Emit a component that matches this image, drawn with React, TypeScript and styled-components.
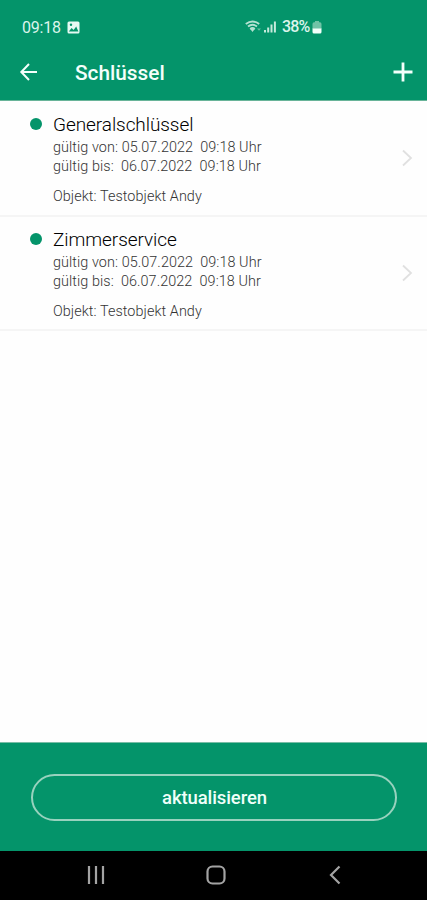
import React from 'react';
import styled, { createGlobalStyle } from 'styled-components';

const GREEN = '#04946a';

const GlobalStyle = createGlobalStyle`
  * { box-sizing: border-box; }
  body { margin: 0; font-family: Roboto, sans-serif; background: #fff; }
`;

const Screen = styled.div`
  display: flex;
  flex-direction: column;
  width: 427px;
  height: 900px;
  overflow: hidden;
  background: #fefefe;
`;

const Header = styled.header`
  flex: none;
  height: 101px;
  background: ${GREEN};
  color: #f4fffb;
  border-bottom: 1px solid #68b499;
`;

const StatusBar = styled.div`
  display: flex;
  align-items: center;
  height: 42px;
  padding: 12px 0 0 22px;
  font-size: 16px;
  line-height: 30px;
  color: #dcf5ec;
`;

const Clock = styled.span`
  width: 45px;
  padding-top: 1px;
  letter-spacing: -0.2px;
`;

const StatusIcons = styled.div`
  display: flex;
  align-items: center;
  margin-left: 165px;
`;

const Battery = styled.span`
  margin: 0 2px 0 5px;
  font-weight: 500;
  letter-spacing: -0.8px;
`;

const AppBar = styled.div`
  display: flex;
  align-items: center;
  height: 58px;
  padding: 1px 13px 0 18px;
`;

const Title = styled.h1`
  flex: 1;
  margin: 2px 0 0 35px;
  font-size: 20.8px;
  font-weight: 500;
  line-height: 28px;
`;

const IconButton = styled.button`
  display: flex;
  padding: 0;
  border: 0;
  background: none;
  color: inherit;
`;

const KeyList = styled.main`
  flex: 1;
`;

const KeyRow = styled.article`
  display: flex;
  height: 114px;
  padding: 11px 14px 0 30px;
  border-bottom: 2px solid #f5f5f5;

  &:first-child { height: 116px; }
  & + & { padding-top: 10px; }
`;

const Dot = styled.span`
  flex: none;
  width: 12px;
  height: 12px;
  margin: 6px 11px 0 0;
  border-radius: 50%;
  background: ${GREEN};
`;

const KeyInfo = styled.div`
  flex: 1;
`;

const KeyName = styled.h2`
  margin: 0;
  font-size: 19px;
  font-weight: 300;
  line-height: 25px;
  letter-spacing: -0.07px;
  color: #000;
`;

const Detail = styled.p<{ $spaced?: boolean }>`
  margin: ${(p) => (p.$spaced ? '10px' : '0')} 0 0;
  font-size: 14.4px;
  font-weight: 300;
  line-height: 19.6px;
  letter-spacing: 0.07px;
  white-space: pre;
  color: #333;

  h2 + & { margin-top: 0.6px; }
`;

const Chevron = styled.svg`
  flex: none;
  margin-top: 37px;
`;

const Footer = styled.footer`
  flex: none;
  height: 109px;
  padding: 31px 30px 0 31px;
  background: ${GREEN};
  border-top: 1px solid #79bda6;
`;

const RefreshButton = styled.button`
  display: block;
  width: 100%;
  height: 47px;
  padding: 1px 0 0 1px;
  border: 2px solid #98d2be;
  border-radius: 24px;
  background: transparent;
  color: #effff9;
  font: 500 18.5px Roboto, sans-serif;
  letter-spacing: -0.1px;
`;

const NavBar = styled.nav`
  flex: none;
  display: flex;
  justify-content: space-between;
  height: 49px;
  padding: 12px 80px 0 84px;
  background: #000;
`;

const keys = [{ name: 'Generalschlüssel' }, { name: 'Zimmerservice' }];

export default function App() {
  return (
    <Screen>
      <GlobalStyle />
      <Header>
        <StatusBar>
          <Clock>09:18</Clock>
          <svg width="13" height="13" viewBox="0 0 13 13">
            <rect x="0.5" y="0.5" width="12" height="12" rx="1.5" fill="#e6faf3" />
            <path d="M1.8 10.5 4.6 7l2 2 2.6-3.4 2.2 4.9z" fill={GREEN} />
            <circle cx="4" cy="3.8" r="1.2" fill={GREEN} />
          </svg>
          <StatusIcons>
            <svg width="32" height="14" viewBox="0 0 32 14" fill="none">
              <path d="M.8 4Q7.500-1 14.200 4M3 6.600Q7.500 3 12 6.600M5.200 9Q7.500 7 9.800 9" stroke="#b4e2d1" strokeWidth="1.9" />
              <path d="M5.200 9Q7.500 7.500 9.800 9L7.500 12z" fill="#b4e2d1" />
              <path d="M12 8.500h4l-2 2.200z" fill="#63bd9e" />
              <path d="M20 12.500V10M23.200 12.500V7.500M26.500 12.500V4.500M29.900 12.500V1.500" stroke="#c5eadc" strokeWidth="2" />
            </svg>
            <Battery>38%</Battery>
            <svg width="10" height="14" viewBox="0 0 10 14">
              <path d="M3 1h4v1.200h1Q9.500 2.200 9.500 4v5h-9V4Q.5 2.200 2 2.200h1z" fill="#6fc3a6" />
              <path d="M.5 8.500h9V12q0 1.500-1.500 1.500H2Q.5 13.500.5 12z" fill="#f2fffa" />
            </svg>
          </StatusIcons>
        </StatusBar>
        <AppBar>
          <IconButton aria-label="Zurück">
            <svg width="22" height="22" viewBox="0 0 22 22" fill="none" stroke="currentColor" strokeWidth="2">
              <path d="M19 11H3.500M11 3 3.300 11 11 19" />
            </svg>
          </IconButton>
          <Title>Schlüssel</Title>
          <IconButton aria-label="Hinzufügen">
            <svg width="22" height="22" viewBox="0 0 22 22" stroke="currentColor" strokeWidth="2.800">
              <path d="M11 1.500v19M1.500 11h19" />
            </svg>
          </IconButton>
        </AppBar>
      </Header>
      <KeyList>
        {keys.map((key) => (
          <KeyRow key={key.name}>
            <Dot />
            <KeyInfo>
              <KeyName>{key.name}</KeyName>
              <Detail>{'gültig von: 05.07.2022  09:18 Uhr'}</Detail>
              <Detail>{'gültig bis:  06.07.2022  09:18 Uhr'}</Detail>
              <Detail $spaced>Objekt: Testobjekt Andy</Detail>
            </KeyInfo>
            <Chevron width="12" height="18" viewBox="0 0 12 18" fill="none" stroke="#e0e0e0" strokeWidth="1.800">
              <path d="M2 1.500 10 9l-8 7.500" />
            </Chevron>
          </KeyRow>
        ))}
      </KeyList>
      <Footer>
        <RefreshButton>aktualisieren</RefreshButton>
      </Footer>
      <NavBar>
        <IconButton aria-label="Letzte Apps">
          <svg width="24" height="24" viewBox="0 0 24 24" stroke="#a3a3a3" strokeWidth="2.200">
            <path d="M5 3v18M12 3v18M19 3v18" />
          </svg>
        </IconButton>
        <IconButton aria-label="Startseite">
          <svg width="24" height="24" viewBox="0 0 24 24" fill="none" stroke="#a3a3a3" strokeWidth="2.200">
            <rect x="3.500" y="3.500" width="17" height="17" rx="5" />
          </svg>
        </IconButton>
        <IconButton aria-label="Zurück">
          <svg width="24" height="24" viewBox="0 0 24 24" fill="none" stroke="#a3a3a3" strokeWidth="2.200">
            <path d="M16.500 3.500 8 12l8.500 8.500" />
          </svg>
        </IconButton>
      </NavBar>
    </Screen>
  );
}
